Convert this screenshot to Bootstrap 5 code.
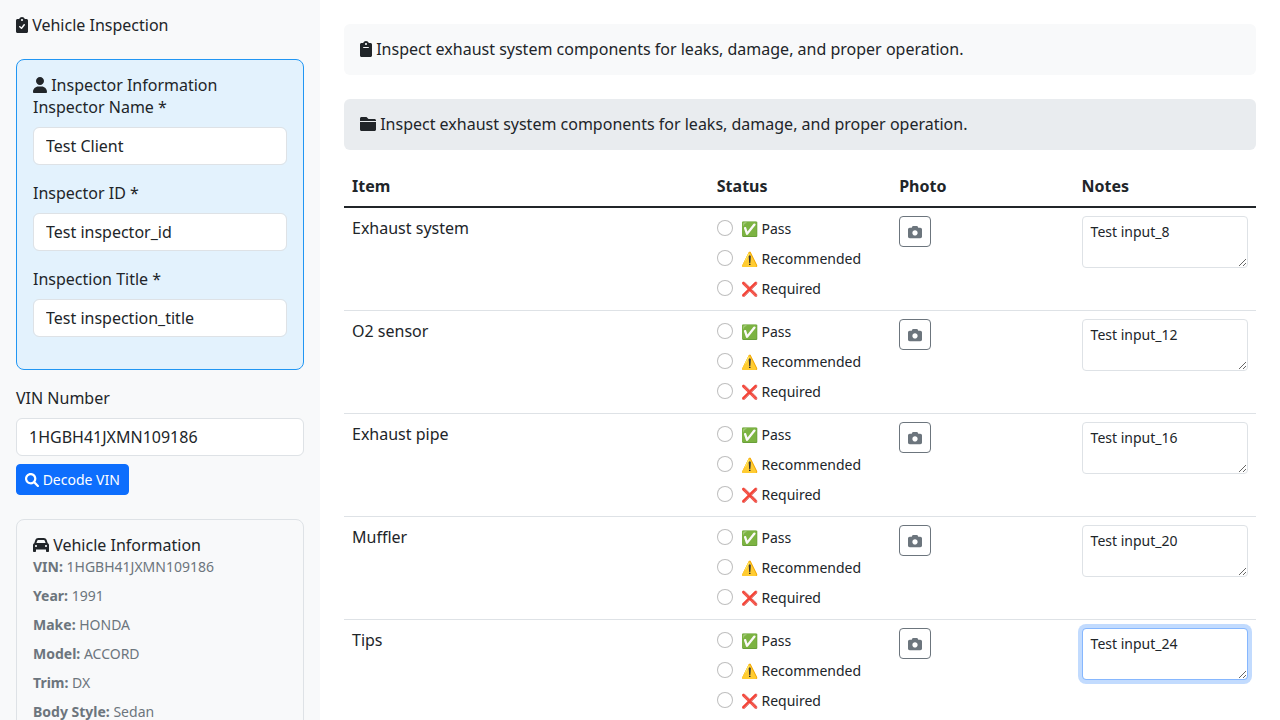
<!DOCTYPE html>
<html lang="en">
<head>
  <meta charset="UTF-8">
  <title>Vehicle Inspection</title>
  <meta name="viewport" content="width=device-width, initial-scale=1">
  <link href="https://cdn.jsdelivr.net/npm/bootstrap@5.3.0/dist/css/bootstrap.min.css" rel="stylesheet">
  <style>
    body {
      font-family: "Noto Sans", sans-serif;
      color: #212529;
    }
    .side-panel {
      width: 320px;
      flex: none;
    }
    .main-panel {
      min-width: 0;
    }
    .ico {
      height: 1em;
      vertical-align: -.125em;
      fill: currentColor;
    }
    .head-line {
      font-size: 16px;
      font-weight: 400;
      line-height: 1.2;
    }
    .inspector-box {
      background-color: #e3f2fd;
      border: 1px solid #2196f3;
      border-radius: 8px;
    }
    .vehicle-box {
      border: 1px solid #dee2e6;
      border-radius: 8px;
    }
    .section-bar {
      background-color: #e9ecef;
    }
    .items-table {
      table-layout: fixed;
    }
    .items-table thead th {
      border-bottom: 2px solid #212529;
    }
    .col-item { width: 40%; }
    .col-rest { width: 20%; }
    .form-check {
      margin-bottom: 6px;
    }
    .form-check:last-child {
      margin-bottom: 2px;
    }
    .form-check-input {
      border-color: rgba(0, 0, 0, .25);
    }
    .form-check-label {
      font-size: 14px;
    }
    .notes-active {
      border-color: #86b7fe;
      box-shadow: 0 0 0 .25rem rgba(13, 110, 253, .25);
    }
  </style>
</head>
<body>
  <div class="d-flex vh-100 overflow-hidden">

    <!-- Sidebar -->
    <div class="side-panel bg-light p-3">
      <h6 class="head-line mb-4">
        <svg class="ico" viewBox="0 0 384 512"><path d="M336 64h-53.88C268.9 26.8 233.7 0 192 0S115.1 26.8 101.9 64H48C21.5 64 0 85.48 0 112v352C0 490.5 21.5 512 48 512h288c26.5 0 48-21.5 48-48v-352C384 85.48 362.5 64 336 64zM192 64c17.67 0 32 14.33 32 32c0 17.67-14.33 32-32 32S160 113.7 160 96C160 78.33 174.3 64 192 64zM282.9 262.8l-88 112c-4.047 5.156-10.02 8.438-16.53 9.062C177.6 383.1 176.8 384 176 384c-5.703 0-11.25-2.031-15.62-5.781l-56-48c-10.06-8.625-11.22-23.78-2.594-33.84c8.609-10.06 23.77-11.22 33.84-2.594l36.98 31.69l72.52-92.28c8.188-10.42 23.3-12.22 33.7-4.062C289.3 237.3 291.1 252.4 282.9 262.8z"/></svg>
        Vehicle Inspection
      </h6>

      <div class="inspector-box p-3 mb-3">
        <h6 class="head-line mb-0">
          <svg class="ico" viewBox="0 0 448 512"><path d="M224 256c70.7 0 128-57.31 128-128s-57.3-128-128-128C153.3 0 96 57.31 96 128S153.3 256 224 256zM274.7 304H173.3C77.61 304 0 381.6 0 477.3c0 19.14 15.52 34.67 34.66 34.67h378.7C432.5 512 448 496.5 448 477.3C448 381.6 370.4 304 274.7 304z"/></svg>
          Inspector Information
        </h6>
        <div class="mb-3">
          <label class="form-label" for="inspectorName">Inspector Name *</label>
          <input type="text" class="form-control" id="inspectorName" value="Test Client">
        </div>
        <div class="mb-3">
          <label class="form-label" for="inspectorId">Inspector ID *</label>
          <input type="text" class="form-control" id="inspectorId" value="Test inspector_id">
        </div>
        <div class="mb-3">
          <label class="form-label" for="inspectionTitle">Inspection Title *</label>
          <input type="text" class="form-control" id="inspectionTitle" value="Test inspection_title">
        </div>
      </div>

      <div class="mb-2">
        <label class="form-label" for="vinNumber">VIN Number</label>
        <input type="text" class="form-control" id="vinNumber" value="1HGBH41JXMN109186">
      </div>
      <button type="button" class="btn btn-primary btn-sm">
        <svg class="ico" viewBox="0 0 512 512"><path d="M500.3 443.7l-119.7-119.7c27.22-40.41 40.65-90.9 33.46-144.7C401.8 87.79 326.8 13.32 235.2 1.723C99.01-15.51-15.51 99.01 1.724 235.2c11.6 91.64 86.08 166.7 177.6 178.9c53.8 7.189 104.3-6.236 144.7-33.46l119.7 119.7c15.62 15.62 40.95 15.62 56.57 0C515.9 484.7 515.9 459.3 500.3 443.7zM79.1 208c0-70.58 57.42-128 128-128s128 57.42 128 128c0 70.58-57.42 128-128 128S79.1 278.6 79.1 208z"/></svg>
        Decode VIN
      </button>

      <div class="vehicle-box p-3 mt-4">
        <h6 class="head-line mb-0">
          <svg class="ico" viewBox="0 0 512 512"><path d="M39.61 196.8L74.8 96.29C88.27 57.78 124.6 32 165.4 32H346.6C387.4 32 423.7 57.78 437.2 96.29L472.4 196.8C495.6 206.4 512 229.3 512 256V448C512 465.7 497.7 480 480 480H448C430.3 480 416 465.7 416 448V400H96V448C96 465.7 81.67 480 64 480H32C14.33 480 0 465.7 0 448V256C0 229.3 16.36 206.4 39.61 196.8V196.8zM109.1 192H402.9L376.8 117.4C372.3 104.6 360.2 96 346.6 96H165.4C151.8 96 139.7 104.6 135.2 117.4L109.1 192zM96 256C78.33 256 64 270.3 64 288C64 305.7 78.33 320 96 320C113.7 320 128 305.7 128 288C128 270.3 113.7 256 96 256zM416 320C433.7 320 448 305.7 448 288C448 270.3 433.7 256 416 256C398.3 256 384 270.3 384 288C384 305.7 398.3 320 416 320z"/></svg>
          Vehicle Information
        </h6>
        <p class="small text-secondary mb-2"><strong>VIN:</strong> 1HGBH41JXMN109186</p>
        <p class="small text-secondary mb-2"><strong>Year:</strong> 1991</p>
        <p class="small text-secondary mb-2"><strong>Make:</strong> HONDA</p>
        <p class="small text-secondary mb-2"><strong>Model:</strong> ACCORD</p>
        <p class="small text-secondary mb-2"><strong>Trim:</strong> DX</p>
        <p class="small text-secondary mb-2"><strong>Body Style:</strong> Sedan</p>
      </div>
    </div>

    <!-- Main content -->
    <div class="main-panel flex-grow-1 p-4">
      <div class="bg-light rounded p-3 mb-4">
        <h6 class="head-line mb-0">
          <svg class="ico" viewBox="0 0 384 512"><path d="M336 64h-53.88C268.9 26.8 233.7 0 192 0S115.1 26.8 101.9 64H48C21.5 64 0 85.48 0 112v352C0 490.5 21.5 512 48 512h288c26.5 0 48-21.5 48-48v-352C384 85.48 362.5 64 336 64zM192 64c17.67 0 32 14.33 32 32s-14.33 32-32 32S160 113.7 160 96S174.3 64 192 64zM272 224h-160C103.2 224 96 216.8 96 208C96 199.2 103.2 192 112 192h160C280.8 192 288 199.2 288 208S280.8 224 272 224z"/></svg>
          Inspect exhaust system components for leaks, damage, and proper operation.
        </h6>
      </div>
      <div class="section-bar rounded p-3 mb-3">
        <h6 class="head-line mb-0">
          <svg class="ico" viewBox="0 0 512 512"><path d="M464 96h-192l-64-64h-160C21.5 32 0 53.5 0 80V160h512V144C512 117.5 490.5 96 464 96zM0 432C0 458.5 21.5 480 48 480h416c26.5 0 48-21.5 48-48V192H0V432z"/></svg>
          Inspect exhaust system components for leaks, damage, and proper operation.
        </h6>
      </div>

      <table class="table items-table">
        <thead>
          <tr>
            <th class="col-item">Item</th>
            <th class="col-rest">Status</th>
            <th class="col-rest">Photo</th>
            <th class="col-rest">Notes</th>
          </tr>
        </thead>
        <tbody id="itemRows"></tbody>
      </table>
    </div>
  </div>

  <script>
    // Build the five inspection rows
    const items = [
      { name: 'Exhaust system', note: 'Test input_8' },
      { name: 'O2 sensor', note: 'Test input_12' },
      { name: 'Exhaust pipe', note: 'Test input_16' },
      { name: 'Muffler', note: 'Test input_20' },
      { name: 'Tips', note: 'Test input_24', active: true }
    ];
    const cameraPath = 'M194.6 32H317.4C338.1 32 356.4 45.22 362.9 64.82L373.3 96H448C483.3 96 512 124.7 512 160V416C512 451.3 483.3 480 448 480H64C28.65 480 0 451.3 0 416V160C0 124.7 28.65 96 64 96H138.7L149.1 64.82C155.6 45.22 173.9 32 194.6 32H194.6zM256 384C309 384 352 341 352 288C352 234.1 309 192 256 192C202.1 192 160 234.1 160 288C160 341 202.1 384 256 384z';
    const statuses = ['✅ Pass', '⚠️ Recommended', '❌ Required'];

    document.getElementById('itemRows').innerHTML = items.map((item, i) => `
      <tr>
        <td>${item.name}</td>
        <td>
          ${statuses.map((s, j) => `
            <div class="form-check">
              <input class="form-check-input" type="radio" name="status${i}" id="status${i}_${j}">
              <label class="form-check-label" for="status${i}_${j}">${s}</label>
            </div>`).join('')}
        </td>
        <td>
          <button type="button" class="btn btn-outline-secondary btn-sm">
            <svg class="ico" viewBox="0 0 512 512"><path d="${cameraPath}"/></svg>
          </button>
        </td>
        <td>
          <textarea class="form-control form-control-sm ${item.active ? 'notes-active' : ''}" rows="2">${item.note}</textarea>
        </td>
      </tr>`).join('');
  </script>
  <script src="https://cdn.jsdelivr.net/npm/bootstrap@5.3.0/dist/js/bootstrap.bundle.min.js"></script>
</body>
</html>
